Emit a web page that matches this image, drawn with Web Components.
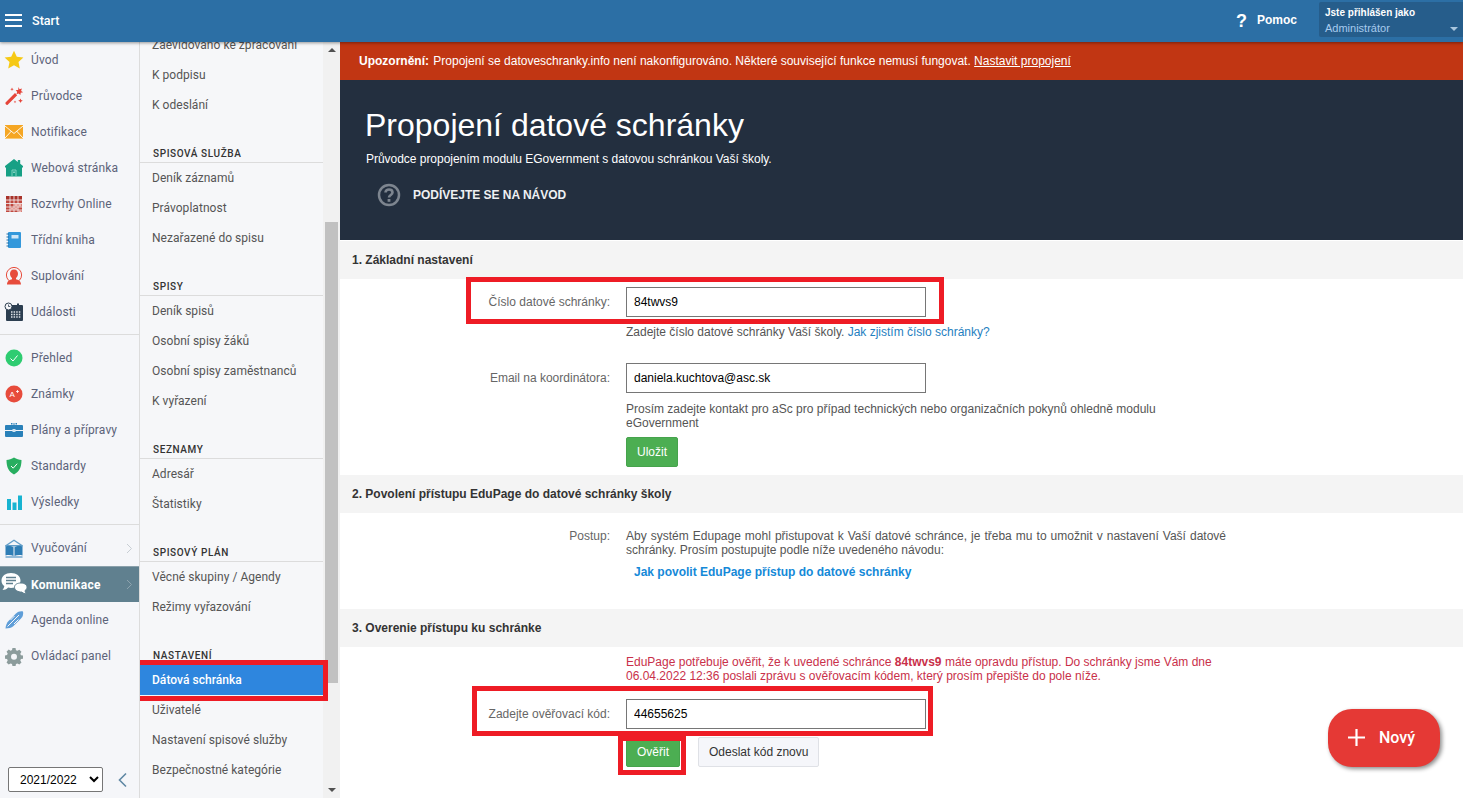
<!DOCTYPE html>
<html lang="cs">
<head>
<meta charset="utf-8">
<title>Propojení datové schránky</title>
<style>
    html, body { margin: 0; height: 100%; overflow: hidden; background: #fff; }
    body { font: 12px "Liberation Sans", Arial, sans-serif; color: #333; }
</style>
</head>
<body>
<app-shell>
    <top-bar slot="top"></top-bar>

    <side-nav slot="side" year="2021/2022">
        <nav-item icon="star" label="Úvod"></nav-item>
        <nav-item icon="wand" label="Průvodce"></nav-item>
        <nav-item icon="mail" label="Notifikace"></nav-item>
        <nav-item icon="house" label="Webová stránka"></nav-item>
        <nav-item icon="grid" label="Rozvrhy Online"></nav-item>
        <nav-item icon="book" label="Třídní kniha"></nav-item>
        <nav-item icon="user" label="Suplování"></nav-item>
        <nav-item icon="events" label="Události"></nav-item>
        <nav-rule></nav-rule>
        <nav-item icon="check" label="Přehled"></nav-item>
        <nav-item icon="grade" label="Známky"></nav-item>
        <nav-item icon="case" label="Plány a přípravy"></nav-item>
        <nav-item icon="shield" label="Standardy"></nav-item>
        <nav-item icon="bars" label="Výsledky"></nav-item>
        <nav-rule></nav-rule>
        <nav-item icon="open" label="Vyučování" arrow></nav-item>
        <nav-item icon="chat" label="Komunikace" arrow active></nav-item>
        <nav-item icon="pen" label="Agenda online"></nav-item>
        <nav-item icon="gear" label="Ovládací panel"></nav-item>
    </side-nav>

    <sub-nav slot="sub">
        <sub-item>Zaevidováno ke zpracování</sub-item>
        <sub-item>K podpisu</sub-item>
        <sub-item>K odeslání</sub-item>
        <sub-head>SPISOVÁ SLUŽBA</sub-head>
        <sub-item>Deník záznamů</sub-item>
        <sub-item>Právoplatnost</sub-item>
        <sub-item>Nezařazené do spisu</sub-item>
        <sub-head>SPISY</sub-head>
        <sub-item>Deník spisů</sub-item>
        <sub-item>Osobní spisy žáků</sub-item>
        <sub-item>Osobní spisy zaměstnanců</sub-item>
        <sub-item>K vyřazení</sub-item>
        <sub-head>SEZNAMY</sub-head>
        <sub-item>Adresář</sub-item>
        <sub-item>Štatistiky</sub-item>
        <sub-head>SPISOVÝ PLÁN</sub-head>
        <sub-item>Věcné skupiny / Agendy</sub-item>
        <sub-item>Režimy vyřazování</sub-item>
        <sub-head>NASTAVENÍ</sub-head>
        <sub-item active marked>Dátová schránka</sub-item>
        <sub-item>Uživatelé</sub-item>
        <sub-item>Nastavení spisové služby</sub-item>
        <sub-item>Bezpečnostné kategórie</sub-item>
    </sub-nav>

    <alert-bar>
        <b>Upozornění:</b> Propojení se datoveschranky.info není nakonfigurováno. Některé související funkce nemusí fungovat. <a>Nastavit propojení</a>
    </alert-bar>

    <page-hero heading="Propojení datové schránky"
        lead="Průvodce propojením modulu EGovernment s datovou schránkou Vaší školy."
        guide="PODÍVEJTE SE NA NÁVOD"></page-hero>

    <section-band style="margin-top:1px">1. Základní nastavení</section-band>
    <form-row label="Číslo datové schránky:" value="84twvs9" style="margin-top:8px" marked="-160,-10,478,47">
        <help-text style="margin-top:8px">Zadejte číslo datové schránky Vaší školy. <a style="color:#1f7fbf">Jak zjistím číslo schránky?</a></help-text>
    </form-row>
    <form-row label="Email na koordinátora:" value="daniela.kuchtova@asc.sk" style="margin-top:24px">
        <help-text style="margin-top:9px">Prosím zadejte kontakt pro aSc pro případ technických nebo organizačních pokynů ohledně modulu eGovernment</help-text>
        <row-actions style="margin-top:7px"><ui-button kind="ok">Uložit</ui-button></row-actions>
    </form-row>

    <section-band style="margin-top:8px">2. Povolení přístupu EduPage do datové schránky školy</section-band>
    <form-row label="Postup:" style="margin-top:16px" plain>
        <help-text style="text-align:justify">Aby systém Edupage mohl přistupovat k Vaší datové schránce, je třeba mu to umožnit v nastavení Vaší datové schránky. Prosím postupujte podle níže uvedeného návodu:</help-text>
        <help-text style="margin:8px 0 0 8px"><a style="color:#1589d8;font-weight:bold">Jak povolit EduPage přístup do datové schránky</a></help-text>
    </form-row>

    <section-band style="margin-top:30px">3. Overenie přístupu ku schránke</section-band>
    <form-row style="margin-top:8px" plain>
        <help-text style="color:#c9304a">EduPage potřebuje ověřit, že k uvedené schránce <b>84twvs9</b> máte opravdu přístup. Do schránky jsme Vám dne 06.04.2022 12:36 poslali zprávu s ověřovacím kódem, který prosím přepište do pole níže.</help-text>
    </form-row>
    <form-row label="Zadejte ověřovací kód:" value="44655625" style="margin-top:16px" marked="-154,-13,461,50">
        <row-actions style="margin-top:8px">
            <ui-button kind="ok" marked>Ověřit</ui-button>
            <ui-button>Odeslat kód znovu</ui-button>
        </row-actions>
    </form-row>

    <new-button slot="float">Nový</new-button>
</app-shell>

<script>
const NAV_ICONS = {
    star: '<path fill="#f6c915" d="M10 .8l2.800 6 6.600.8-4.900 4.400 1.300 6.500L10 15.300l-5.800 3.200 1.300-6.500L.6 7.600l6.600-.8z"/>',
    wand: '<path fill="#e5453a" d="M1.500 16.500l9.500-9.500 2.200 2.200-9.500 9.500q-1 .5-1.800-.4-.8-.9-.4-1.800z"/><path fill="#e5453a" d="M14.500 1l1 2.200 2.400-.6-.8 2.300 2 1.400-2.400.4-.3 2.400-1.800-1.700-2.200.8.8-2.300-1.400-1.900 2.400.1z"/><path fill="#e5453a" d="M16.500 12.500l.7 1.600 1.600.7-1.600.7-.7 1.600-.7-1.600-1.600-.7 1.600-.7zM8 1.500l.5 1.200 1.200.5-1.200.5-.5 1.200-.5-1.200-1.200-.5 1.200-.5zM11 14.500l.4 1 1 .4-1 .4-.4 1-.4-1-1-.4 1-.4z"/>',
    mail: '<g transform="translate(1)"><rect y="3" width="18" height="14" fill="#f5a623"/><path fill="none" stroke="#fff" stroke-width=".9" d="M0 4l9 7.500L18 4M0 16l6.500-7M18 16l-6.500-7"/><rect y="16.200" width="18" height=".8" fill="#fbd38a"/></g>',
    house: '<path fill="#17a085" d="M10 1l3.800 3V2h2.400v3.800L19 8v1.500h-1V18.500H2V9.500H1V8z"/><path fill="none" stroke="#7fd0bf" d="M8 18.500v-6.500h4v6.500"/><rect x="9" y="13.500" width="2" height="1.500" fill="#7fd0bf"/>',
    grid: '<rect x="2" y="2" width="16" height="16" fill="#c0483f"/><rect x="2" y="2" width="16" height="3.500" fill="#a8322a"/><path stroke="#f5f6f9" stroke-width=".8" d="M2 6h16M2 9.500h16M2 13h16M2 16h16M6 2v16M10 2v16M14 2v16"/><rect x="10.500" y="10" width="3" height="2.600" fill="#efb8b2"/><rect x="14.500" y="10" width="3" height="2.600" fill="#efb8b2"/><rect x="6.500" y="13.500" width="3" height="2.200" fill="#efb8b2"/><rect x="10.500" y="13.500" width="3" height="2.200" fill="#efb8b2"/><rect x="14.500" y="16.500" width="3" height="1.500" fill="#efb8b2"/>',
    book: '<rect x="4" y="2" width="13" height="16" rx="1" fill="#3498db"/><rect x="7.500" y="5" width="7" height="3.500" fill="#cfe6f7"/><path stroke="#1f6fa8" stroke-width="1" d="M2.500 4h2.500M2.500 7h2.500M2.500 10h2.500M2.500 13h2.500M2.500 16h2.500"/>',
    user: '<circle cx="10" cy="9" r="7.600" fill="none" stroke="#e74c3c" stroke-width="1"/><path fill="#e74c3c" d="M10 3.500c2.600 0 4 2 4 4.300 0 1.800-.9 3.400-2 4.300v1.200c2 .6 5 1.500 5 5.200H3c0-3.700 3-4.600 5-5.200v-1.200c-1.100-.9-2-2.500-2-4.300 0-2.300 1.400-4.300 4-4.300z"/>',
    events: '<rect x="2" y="3" width="17" height="16" rx="1" fill="#2c3e50"/><path stroke="#dfe5ea" stroke-width="1.300" stroke-dasharray="1.500 1.100" d="M7 10h10M7 12.500h10M7 15h10"/><circle cx="4.500" cy="4.500" r="3.500" fill="#f5f6f9" stroke="#2c3e50"/><path stroke="#2c3e50" fill="none" stroke-width=".8" d="M4.500 2.500v2h1.800"/><rect x="13" y="1.500" width="2" height="3" fill="#2c3e50"/>',
    check: '<circle cx="10" cy="10" r="8.500" fill="#2ecc71"/><path fill="none" stroke="#fff" stroke-width="1" d="M6.500 10.500l2.500 2.500 4.500-5.500"/>',
    grade: '<circle cx="10" cy="10" r="8.500" fill="#e74c3c"/><text x="5.500" y="13" font-family="Liberation Sans" font-size="8" fill="#fff">A</text><path stroke="#fff" stroke-width=".8" d="M12 7.500h3M13.500 6v3"/>',
    case: '<path fill="#2980b9" d="M2 5h5V3h6v2h5q1 0 1 1v4H1V6q0-1 1-1z"/><path fill="#2980b9" d="M1 11h18v5q0 1-1 1H2q-1 0-1-1z"/><rect x="8.500" y="9" width="3" height="3" fill="#cfe3f2"/><path fill="none" stroke="#f5f6f9" d="M8 5V4h4v1"/>',
    shield: '<path fill="#27ae60" d="M10 1.500c2.500 1.500 5 2.300 7.500 2.500 0 7-2 11.700-7.500 14.500C4.500 15.700 2.500 11 2.500 4c2.500-.2 5-1 7.500-2.500z"/><path fill="none" stroke="#fff" stroke-width="1" d="M7 10l2.200 2.200 4-4.500"/>',
    bars: '<rect x="3" y="7" width="4" height="11" fill="#17b3d1"/><rect x="8.500" y="10.500" width="4" height="7.500" fill="#17b3d1"/><rect x="14" y="3.500" width="4" height="14.500" fill="#17b3d1"/>',
    open: '<path fill="#2e7db5" d="M1 7.500L10 1.500l9 6v1H1z" opacity=".75"/><path fill="#f5f6f9" d="M4 7L10 3l6 4z"/><path fill="#2e7db5" d="M1.500 8.500c3-.8 6-.5 8 .8v8.700c-2-1-5-1.300-8-.6zM18.500 8.500c-3-.8-6-.5-8 .8v8.700c2-1 5-1.300 8-.6z"/><path stroke="#2e7db5" d="M1.500 19h17"/>',
    pen: '<path fill="#5f9ed8" d="M1.500 18.500c.2-3 1.200-5.500 3-7.500l7.500-7.500C14 1.500 16.500 1 19 1.500c.5 2.500 0 5-2 7l-7.500 7.500c-2 2-5 2.300-8 2.500z"/><path fill="none" stroke="#f5f6f9" stroke-width="1" d="M3.500 16.500L15 5M6.500 10l4-4M10 14l4.500-4.500"/>',
    gear: '<path fill="#8c9c9c" d="M8.300 1.500h3.400l.5 2.400 1.600.7 2.100-1.300 2.400 2.400-1.300 2.100.7 1.600 2.300.5v3.400l-2.300.5-.7 1.600 1.300 2.100-2.400 2.400-2.100-1.300-1.600.7-.5 2.300H8.300l-.5-2.300-1.600-.7-2.100 1.300-2.400-2.400 1.300-2.100-.7-1.600-2.300-.5V9.700l2.300-.5.7-1.600-1.300-2.100 2.400-2.400 2.100 1.300 1.600-.7z" transform="translate(1 .7) scale(.9)"/><circle cx="10" cy="10.800" r="3" fill="#f5f6f9"/>'
}

// the chat icon is wider than the others and overflows its slot
const CHAT_ICON = `
    <svg width="27" height="27" viewBox="0 0 27 27" style="margin:-3px 0 0 -3px;flex:none">
        <path fill="#fff" d="M10 1c5.500 0 9.500 3 9.500 7.500S15.500 16 10 16c-1 0-2-.1-2.900-.4C5.500 17.400 3.500 18 1.500 18c1-1.200 1.700-2.500 1.800-4C1.300 12.700.5 10.800.5 8.500.5 4 4.500 1 10 1z"/>
        <path stroke="#60808f" stroke-width="1.400" d="M5 5.500h10M5 8.500h10M5 11.500h7"/>
        <path fill="#fff" stroke="#60808f" d="M20 11c3.300 0 6 1.800 6 4.300 0 1.400-.8 2.500-2 3.300 0 1.200.5 2.300 1.300 3.200-1.700 0-3.200-.5-4.300-1.700-4 0-7.500-1.800-7.500-4.800s3-4.300 6.500-4.300z"/>
    </svg>`

class AppShell extends HTMLElement {
    constructor() {
        super()
        this.attachShadow({ mode: 'open' }).innerHTML = `
            <style>
                :host { display: grid; grid-template: 42px 756px / 140px 200px 1fr; height: 798px; position: relative; }
                .top { grid-column: 1 / -1; position: relative; z-index: 3; box-shadow: 0 1px 3px rgba(0,0,0,.4); }
                main { display: flex; flex-direction: column; min-width: 0; overflow: hidden; }
            </style>
            <div class="top"><slot name="top"></slot></div>
            <slot name="side"></slot>
            <slot name="sub"></slot>
            <main><slot></slot></main>
            <slot name="float"></slot>
        `
    }
}

class TopBar extends HTMLElement {
    constructor() {
        super()
        this.attachShadow({ mode: 'open' }).innerHTML = `
            <style>
                :host { display: flex; align-items: center; height: 42px; background: #2c6fa5; color: #fff; }
                .burger { margin: -2px 0 0 5px; width: 17px; height: 13px; border-top: 2px solid #fff; border-bottom: 2px solid #fff; box-sizing: border-box; position: relative; }
                .burger::after { content: ""; position: absolute; left: 0; right: 0; top: 3.500px; height: 2px; background: #fff; }
                .start { margin-left: 10px; font: 500 12.600px Roboto, sans-serif; flex: 1; margin-top: -2px; }
                .q { font: bold 18px "Liberation Sans", sans-serif; margin-right: 10px; margin-top: 1px; }
                .help { font: bold 12px "Liberation Sans", sans-serif; margin-right: 22px; margin-top: -3px; }
                .who { width: 144px; height: 35px; margin-top: -4px; box-sizing: border-box; padding: 3px 0 0 6px; background: #265d8b; border-radius: 2px 0 0 2px; position: relative; font: 11px/15px "Liberation Sans", sans-serif; }
                .who b { display: block; font-size: 10px; }
                .who span { color: #a8cbee; display: block; margin-top: 1px; }
                .who i { position: absolute; right: 5px; top: 25px; border: 4px solid transparent; border-top: 4px solid #a9c6de; border-bottom: 0; }
            </style>
            <div class="burger"></div>
            <div class="start">Start</div>
            <div class="q">?</div>
            <div class="help">Pomoc</div>
            <div class="who"><b>Jste přihlášen jako</b><span>Administrátor</span><i></i></div>
        `
    }
}

class SideNav extends HTMLElement {
    constructor() {
        super()
        this.attachShadow({ mode: 'open' }).innerHTML = `
            <style>
                :host { display: flex; flex-direction: column; background: #f5f6f9; border-right: 1px solid #dcdcdc; box-sizing: border-box; width: 140px; overflow: hidden; }
                .list { flex: 1; }
                .foot { display: flex; align-items: center; padding: 0 0 6px 8px; }
                select { width: 95px; height: 25px; font: 12px "Liberation Sans", sans-serif; background: #fff; color: #000; border: 1px solid #767676; border-radius: 2px; padding-left: 7px; }
                svg { margin-left: 14px; }
            </style>
            <div class="list"><slot></slot></div>
            <div class="foot">
                <select><option></option></select>
                <svg width="12" height="16" viewBox="0 0 12 16"><path fill="none" stroke="#5f87a3" stroke-width="1.600" d="M9 1.500L2.500 8 9 14.500"/></svg>
            </div>
        `
        this.shadowRoot.querySelector('option').textContent = this.getAttribute('year')
    }
}

class NavItem extends HTMLElement {
    constructor() {
        super()
        const name = this.getAttribute('icon')
        const icon = name === 'chat' ? CHAT_ICON : `<svg width="20" height="20" viewBox="0 0 20 20">${NAV_ICONS[name]}</svg>`
        this.attachShadow({ mode: 'open' }).innerHTML = `
            <style>
                :host { display: flex; align-items: center; height: 36px; padding-left: 4px; box-sizing: border-box; color: #5c6379; font: 12px Roboto, sans-serif; letter-spacing: .13px; }
                :host([active]) { background: #60808f; color: #fff; font-weight: bold; letter-spacing: .3px; border-top: 1px solid #8aa0ab; }
                .ico { width: 27px; height: 20px; flex: none; display: flex; }
                .txt { flex: 1; }
                .arrow { margin-right: 6px; }
            </style>
            <div class="ico">${icon}</div>
            <div class="txt"></div>
            ${this.hasAttribute('arrow') ? '<svg class="arrow" width="7" height="11" viewBox="0 0 7 11"><path fill="none" stroke="#c8ced4" d="M1 1l4.500 4.500L1 10"/></svg>' : ''}
        `
        this.shadowRoot.querySelector('.txt').textContent = this.getAttribute('label')
        if (this.hasAttribute('active')) {
            this.shadowRoot.querySelector('.arrow path').setAttribute('stroke', '#8ea3ae')
        }
    }
}

class NavRule extends HTMLElement {
    constructor() {
        super()
        this.attachShadow({ mode: 'open' }).innerHTML = `
            <style>:host { display: block; height: 1px; margin: 4px 0 5px; background: #dcdcdc; }</style>
        `
    }
}

class SubNav extends HTMLElement {
    constructor() {
        super()
        this.attachShadow({ mode: 'open' }).innerHTML = `
            <style>
                :host { display: flex; background: #f6f7f9; width: 200px; overflow: hidden; }
                .list { flex: 1; min-width: 0; margin-top: -12px; }
                .bar { width: 17px; flex: none; display: flex; flex-direction: column; align-items: center; background: #f1f1f1; position: relative; }
                .arrow { height: 16px; display: flex; align-items: center; justify-content: center; flex: none; }
                .up { border: 4px solid transparent; border-bottom: 4px solid #505050; border-top: 0; }
                .down { border: 4px solid transparent; border-top: 4px solid #505050; border-bottom: 0; }
                .track { flex: 1; align-self: stretch; padding: 164px 0 0; box-sizing: border-box; display: flex; flex-direction: column; }
                .thumb { height: 461px; margin: 0 2px; background: #c1c1c1; }
            </style>
            <div class="list"><slot></slot></div>
            <div class="bar">
                <div class="arrow"><div class="up"></div></div>
                <div class="track"><div class="thumb"></div></div>
                <div class="arrow"><div class="down"></div></div>
            </div>
        `
    }
}

class SubHead extends HTMLElement {
    constructor() {
        super()
        this.attachShadow({ mode: 'open' }).innerHTML = `
            <style>
                :host { display: flex; align-items: flex-end; height: 43px; box-sizing: border-box; padding: 0 0 3px 13px; border-bottom: 1px solid #dcdcdc; color: #333; font: 500 10px Roboto, sans-serif; letter-spacing: .6px; }
            </style>
            <slot></slot>
        `
    }
}

class SubItem extends HTMLElement {
    constructor() {
        super()
        this.attachShadow({ mode: 'open' }).innerHTML = `
            <style>
                :host { display: flex; align-items: center; height: 30px; box-sizing: border-box; padding: 0 0 0 12px; color: #555; font: 12px Roboto, sans-serif; letter-spacing: .04px; position: relative; }
                :host([active]) { background: #2e86de; color: #fff; font-weight: 500; }
                mark-box { left: -6px; top: -5px; right: -5px; bottom: -6px; }
            </style>
            <slot></slot>
            ${this.hasAttribute('marked') ? '<mark-box></mark-box>' : ''}
        `
    }
}

class MarkBox extends HTMLElement {
    constructor() {
        super()
        this.attachShadow({ mode: 'open' }).innerHTML = `
            <style>
                :host { display: block; position: absolute; box-sizing: border-box; border: 5px solid #ee1c25; pointer-events: none; z-index: 2; }
            </style>
        `
    }
}

class AlertBar extends HTMLElement {
    constructor() {
        super()
        this.attachShadow({ mode: 'open' }).innerHTML = `
            <style>
                :host { display: flex; align-items: center; flex: none; height: 38px; padding-left: 19px; background: #c13613; color: #fff; white-space: pre; }
                ::slotted(a) { text-decoration: underline; }
                ::slotted(b) { margin-right: 1px; }
            </style>
            <slot></slot>
        `
    }
}

class PageHero extends HTMLElement {
    constructor() {
        super()
        this.attachShadow({ mode: 'open' }).innerHTML = `
            <style>
                :host { display: block; flex: none; height: 160px; box-sizing: border-box; padding: 26px 25px 0; background: #232f3f; color: #fff; }
                h1 { margin: 0; font: 32px/38px "Liberation Sans", sans-serif; }
                p { margin: 8px 0 0 1px; font-size: 12px; line-height: 14px; letter-spacing: -.03px; }
                .guide { display: flex; align-items: center; margin: 17px 0 0 12px; font-weight: bold; color: #eef0f2; letter-spacing: -.02px; }
                svg { margin-right: 12px; }
            </style>
            <h1></h1>
            <p></p>
            <div class="guide">
                <svg width="24" height="24" viewBox="0 0 24 24">
                    <circle cx="12" cy="12" r="10" fill="none" stroke="#7d858f" stroke-width="2.500"/>
                    <path fill="none" stroke="#7d858f" stroke-width="2.600" d="M8.500 9.500c0-2 1.500-3 3.500-3s3.500 1.200 3.500 3c0 2.500-3.500 2.500-3.500 5"/>
                    <rect x="10.600" y="16" width="2.800" height="2.800" fill="#7d858f"/>
                </svg>
                <span></span>
            </div>
        `
        const root = this.shadowRoot
        root.querySelector('h1').textContent = this.getAttribute('heading')
        root.querySelector('p').textContent = this.getAttribute('lead')
        root.querySelector('span').textContent = this.getAttribute('guide')
    }
}

class SectionBand extends HTMLElement {
    constructor() {
        super()
        this.attachShadow({ mode: 'open' }).innerHTML = `
            <style>
                :host { display: flex; align-items: center; flex: none; height: 38px; padding-left: 12px; background: #f4f4f4; color: #333; font-weight: bold; }
            </style>
            <slot></slot>
        `
    }
}

class FormRow extends HTMLElement {
    constructor() {
        super()
        const marked = this.getAttribute('marked')
        const box = marked ? marked.split(',') : null
        this.attachShadow({ mode: 'open' }).innerHTML = `
            <style>
                :host { display: grid; grid-template-columns: 270px 600px; column-gap: 16px; flex: none; }
                label { text-align: right; color: #666; line-height: 14px; }
                :host(:not([plain])) label { line-height: 30px; }
                .field { position: relative; }
                input { display: block; width: 300px; height: 30px; box-sizing: border-box; padding: 0 7px; border: 1px solid #767676; font: 12px "Liberation Sans", sans-serif; color: #000; background: #fff; border-radius: 0; outline: 0; }
                mark-box { ${box ? `left:${box[0]}px; top:${box[1]}px; width:${box[2]}px; height:${box[3]}px;` : ''} }
            </style>
            <label>${this.getAttribute('label') || ''}</label>
            <div class="field">
                ${this.hasAttribute('value') ? '<input>' : ''}
                ${box ? '<mark-box></mark-box>' : ''}
                <slot></slot>
            </div>
        `
        const input = this.shadowRoot.querySelector('input')
        if (input) {
            input.setAttribute('value', this.getAttribute('value'))
        }
    }
}

class HelpText extends HTMLElement {
    constructor() {
        super()
        this.attachShadow({ mode: 'open' }).innerHTML = `
            <style>:host { display: block; color: #555; line-height: 14px; }</style>
            <slot></slot>
        `
    }
}

class RowActions extends HTMLElement {
    constructor() {
        super()
        this.attachShadow({ mode: 'open' }).innerHTML = `
            <style>:host { display: flex; gap: 18px; }</style>
            <slot></slot>
        `
    }
}

class UiButton extends HTMLElement {
    constructor() {
        super()
        this.attachShadow({ mode: 'open' }).innerHTML = `
            <style>
                :host { display: flex; align-items: center; height: 30px; box-sizing: border-box; padding: 0 10px; position: relative; background: #f5f6fa; border: 1px solid #dfe1e6; border-radius: 2px; color: #333; }
                :host([kind=ok]) { background: #4cae52; border-color: #46a34c; color: #fff; }
                mark-box { left: -9px; top: -2px; right: -7px; bottom: -9px; }
            </style>
            <slot></slot>
            ${this.hasAttribute('marked') ? '<mark-box></mark-box>' : ''}
        `
    }
}

class NewButton extends HTMLElement {
    constructor() {
        super()
        this.attachShadow({ mode: 'open' }).innerHTML = `
            <style>
                :host { position: absolute; left: 1328px; top: 709px; width: 112px; height: 58px; box-sizing: border-box; padding: 0 0 2px 20px; display: flex; align-items: center; gap: 14px; border-radius: 24px; background: #e53935; color: #fff; font: 500 16px Roboto, sans-serif; box-shadow: 2px 2px 4px rgba(0,0,0,.45); z-index: 4; }
            </style>
            <svg width="17" height="17" viewBox="0 0 17 17"><path stroke="#fff" stroke-width="2.200" d="M8.500 0v17M0 8.500h17"/></svg>
            <slot></slot>
        `
    }
}

customElements.define('mark-box', MarkBox)
customElements.define('app-shell', AppShell)
customElements.define('top-bar', TopBar)
customElements.define('side-nav', SideNav)
customElements.define('nav-item', NavItem)
customElements.define('nav-rule', NavRule)
customElements.define('sub-nav', SubNav)
customElements.define('sub-head', SubHead)
customElements.define('sub-item', SubItem)
customElements.define('alert-bar', AlertBar)
customElements.define('page-hero', PageHero)
customElements.define('section-band', SectionBand)
customElements.define('form-row', FormRow)
customElements.define('help-text', HelpText)
customElements.define('row-actions', RowActions)
customElements.define('ui-button', UiButton)
customElements.define('new-button', NewButton)
</script>
</body>
</html>
